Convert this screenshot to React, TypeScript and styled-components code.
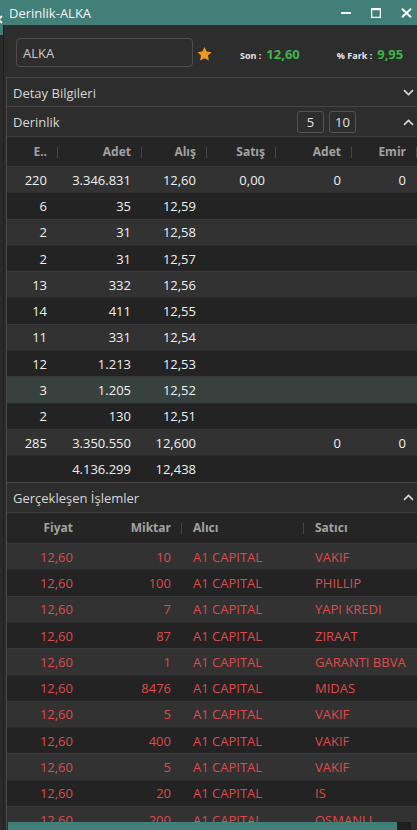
import React from 'react';
import styled, { createGlobalStyle } from 'styled-components';

const TEAL = '#427f79';

const GlobalStyle = createGlobalStyle`
  html, body { margin: 0; padding: 0; background: #2b2b2b; }
  body { font-family: "Open Sans", "Noto Sans", "Liberation Sans", sans-serif; }
  * { box-sizing: border-box; }
`;

const Page = styled.div`
  display: flex;
  width: 417px;
  height: 830px;
  overflow: hidden;
  background: #2d2d2d;
`;

/* sliver of the window lying behind this one */
const Backdrop = styled.div`
  flex: none;
  width: 3px;
  overflow: hidden;
  background: linear-gradient(to bottom, ${TEAL} 0 35px, #2a2a2a 35px);
  svg { display: block; margin: 15px 0 0 -6px; }
`;

const Window = styled.div`
  flex: 1;
  min-width: 0;
  display: flex;
  flex-direction: column;
`;

const TitleBar = styled.div`
  flex: none;
  height: 25px;
  display: flex;
  align-items: center;
  background: ${TEAL};
  padding: 0 5px 0 6px;
`;

const Title = styled.div`
  flex: 1;
  color: #f4f4f4;
  font-size: 13px;
  line-height: 18px;
`;

const Controls = styled.div`
  display: flex;
  align-items: center;
  gap: 20px;
`;

const WindowButton = styled.button`
  padding: 0;
  border: 0;
  background: none;
  display: flex;
  align-items: center;
  justify-content: center;
  height: 25px;
  svg { display: block; }
`;

const Body = styled.div`
  flex: 1;
  min-height: 0;
  display: flex;
  flex-direction: column;
  background: #2d2d2d;
  border-left: 1px solid #1f1f1f;
`;

const QuoteBar = styled.div`
  flex: none;
  height: 52px;
  display: flex;
  align-items: center;
  padding: 3px 0 0 12px;
`;

const SymbolInput = styled.div`
  width: 177px;
  height: 29px;
  border: 1px solid #4c4c4c;
  border-radius: 4px;
  padding-left: 6px;
  display: flex;
  align-items: center;
  color: #cbcbcb;
  font-size: 13px;
`;

const StarWrap = styled.div`
  margin: 2px 0 0 3px;
  display: flex;
  svg { display: block; }
`;

const Stat = styled.div<{ $ml: number }>`
  display: flex;
  align-items: baseline;
  gap: 5px;
  margin-left: ${(p) => p.$ml}px;
  margin-top: 2px;
`;

const StatLabel = styled.span`
  color: #e6e6e6;
  font-size: 9px;
  font-weight: 700;
`;

const StatValue = styled.span`
  color: #3cb64b;
  font-size: 13px;
  font-weight: 700;
`;

const Panels = styled.div`
  flex: 1;
  min-height: 0;
  display: flex;
  flex-direction: column;
  margin-left: 2px;
  border-left: 1px solid #474747;
`;

const SectionHeader = styled.div<{ $h: number }>`
  flex: none;
  height: ${(p) => p.$h}px;
  display: flex;
  align-items: center;
  border-top: 1px solid #454545;
  padding: 1px 3px 0 6px;
  color: #d6d6d6;
  font-size: 13px;
`;

const SectionTitle = styled.div`
  flex: 1;
`;

const DepthButtons = styled.div`
  display: flex;
  gap: 5px;
  margin-right: 47px;
`;

const NumButton = styled.div`
  width: 27px;
  height: 22px;
  border: 1px solid #535353;
  border-radius: 3px;
  display: flex;
  align-items: center;
  justify-content: center;
  color: #e0e0e0;
  font-size: 13px;
`;

const Chevron = styled.svg`
  display: block;
  flex: none;
`;

const HeadRow = styled.div<{ $cols: string; $h: number }>`
  flex: none;
  display: grid;
  grid-template-columns: ${(p) => p.$cols};
  height: ${(p) => p.$h}px;
  align-items: center;
  background: #252525;
  border-top: 1px solid #3a3a3a;
  color: #a2a2a2;
  font-size: 12px;
  font-weight: 700;
`;

const HeadCell = styled.div<{ $align: 'left' | 'right'; $sep?: boolean }>`
  position: relative;
  text-align: ${(p) => p.$align};
  padding: ${(p) => (p.$align === 'right' ? '0 11px 0 0' : '0 0 0 11px')};
  line-height: 28px;
  white-space: nowrap;
  &::after {
    content: '';
    display: ${(p) => (p.$sep ? 'block' : 'none')};
    position: absolute;
    right: 0;
    top: 9px;
    width: 1px;
    height: 11px;
    background: #474747;
  }
`;

type Tone = 'light' | 'dark' | 'hl';
const toneBg: Record<Tone, string> = {
  light: '#323232',
  dark: '#232323',
  hl: '#37423f',
};

const DataRow = styled.div<{ $cols: string; $tone: Tone }>`
  flex: none;
  display: grid;
  grid-template-columns: ${(p) => p.$cols};
  height: 26.3px;
  align-items: center;
  background: ${(p) => toneBg[p.$tone]};
  border-top: 1px solid ${(p) => (p.$tone === 'dark' ? '#2b2b2b' : '#383838')};
  font-size: 13px;
`;

const Cell = styled.div<{ $align: 'left' | 'right'; $color: string }>`
  text-align: ${(p) => p.$align};
  padding: ${(p) => (p.$align === 'right' ? '0 11px 0 0' : '0 0 0 11px')};
  color: ${(p) => p.$color};
  white-space: nowrap;
  overflow: hidden;
`;

const TradesArea = styled.div`
  flex: 1;
  min-height: 0;
  overflow: hidden;
  display: flex;
  flex-direction: column;
`;

const ScrollTrack = styled.div`
  flex: none;
  height: 8px;
  display: flex;
`;

const ScrollThumb = styled.div`
  flex: 1;
  margin-left: 1px;
  background: ${TEAL};
`;

const ScrollCorner = styled.div`
  width: 14px;
  background: #1f1f1f;
`;

const ScrollRest = styled.div`
  width: 6px;
`;

const DEPTH_COLS = '51px 84px 65px 69px 76px 1fr';
const TRADE_COLS = '77px 98px 122px 1fr';

const depthRows: string[][] = [
  ['220', '3.346.831', '12,60', '0,00', '0', '0'],
  ['6', '35', '12,59', '', '', ''],
  ['2', '31', '12,58', '', '', ''],
  ['2', '31', '12,57', '', '', ''],
  ['13', '332', '12,56', '', '', ''],
  ['14', '411', '12,55', '', '', ''],
  ['11', '331', '12,54', '', '', ''],
  ['12', '1.213', '12,53', '', '', ''],
  ['3', '1.205', '12,52', '', '', ''],
  ['2', '130', '12,51', '', '', ''],
  ['285', '3.350.550', '12,600', '', '0', '0'],
  ['', '4.136.299', '12,438', '', '', ''],
];

const trades: [string, string, string, string][] = [
  ['12,60', '10', 'A1 CAPITAL', 'VAKIF'],
  ['12,60', '100', 'A1 CAPITAL', 'PHILLIP'],
  ['12,60', '7', 'A1 CAPITAL', 'YAPI KREDI'],
  ['12,60', '87', 'A1 CAPITAL', 'ZIRAAT'],
  ['12,60', '1', 'A1 CAPITAL', 'GARANTI BBVA'],
  ['12,60', '8476', 'A1 CAPITAL', 'MIDAS'],
  ['12,60', '5', 'A1 CAPITAL', 'VAKIF'],
  ['12,60', '400', 'A1 CAPITAL', 'VAKIF'],
  ['12,60', '5', 'A1 CAPITAL', 'VAKIF'],
  ['12,60', '20', 'A1 CAPITAL', 'IS'],
  ['12,60', '200', 'A1 CAPITAL', 'OSMANLI'],
];

const depthHeads = ['E..', 'Adet', 'Alış', 'Satış', 'Adet', 'Emir'];

const ChevronDown = () => (
  <Chevron width="11" height="7" viewBox="0 0 11 7">
    <path d="M1 1.2 L5.5 5.5 L10 1.2" fill="none" stroke="#d8d8d8" strokeWidth="1.7" />
  </Chevron>
);

const ChevronUp = () => (
  <Chevron width="11" height="7" viewBox="0 0 11 7">
    <path d="M1 5.8 L5.5 1.5 L10 5.8" fill="none" stroke="#d8d8d8" strokeWidth="1.7" />
  </Chevron>
);

export default function App() {
  return (
    <>
      <GlobalStyle />
      <Page>
        <Backdrop>
          <svg width="9" height="9" viewBox="0 0 9 9">
            <path d="M1 1 L8 8 M8 1 L1 8" stroke="#ffffff" strokeWidth="1.8" />
          </svg>
        </Backdrop>
        <Window>
          <TitleBar>
            <Title>Derinlik-ALKA</Title>
            <Controls>
              <WindowButton aria-label="minimize">
                <svg width="10" height="10" viewBox="0 0 10 10">
                  <rect x="0" y="4" width="10" height="2" fill="#ffffff" />
                </svg>
              </WindowButton>
              <WindowButton aria-label="maximize">
                <svg width="10" height="10" viewBox="0 0 10 10">
                  <rect x="0.6" y="0.8" width="8.8" height="8.6" fill="none" stroke="#ffffff" strokeWidth="1.3" />
                  <rect x="0" y="0" width="10" height="2.2" fill="#ffffff" />
                </svg>
              </WindowButton>
              <WindowButton aria-label="close">
                <svg width="11" height="10" viewBox="0 0 11 10">
                  <path d="M1 0.8 L10 9.2 M10 0.8 L1 9.2" stroke="#ffffff" strokeWidth="2" />
                </svg>
              </WindowButton>
            </Controls>
          </TitleBar>
          <Body>
            <QuoteBar>
              <SymbolInput>ALKA</SymbolInput>
              <StarWrap>
                <svg width="17" height="16" viewBox="0 0 24 23">
                  <path
                    d="M12 1.5l3.1 6.5 7.1.9-5.2 4.9 1.3 7.1L12 17.5l-6.3 3.4 1.3-7.1L1.8 8.9l7.1-.9z"
                    fill="#f19a1f"
                  />
                </svg>
              </StarWrap>
              <Stat $ml={27}>
                <StatLabel>Son :</StatLabel>
                <StatValue>12,60</StatValue>
              </Stat>
              <Stat $ml={37}>
                <StatLabel>% Fark :</StatLabel>
                <StatValue>9,95</StatValue>
              </Stat>
            </QuoteBar>
            <Panels>
              <SectionHeader $h={29}>
                <SectionTitle>Detay Bilgileri</SectionTitle>
                <ChevronDown />
              </SectionHeader>
              <SectionHeader $h={30}>
                <SectionTitle>Derinlik</SectionTitle>
                <DepthButtons>
                  <NumButton>5</NumButton>
                  <NumButton>10</NumButton>
                </DepthButtons>
                <ChevronUp />
              </SectionHeader>
              <HeadRow $cols={DEPTH_COLS} $h={30}>
                {depthHeads.map((h, i) => (
                  <HeadCell key={i} $align="right" $sep>
                    {h}
                  </HeadCell>
                ))}
              </HeadRow>
              {depthRows.map((r, i) => (
                <DataRow
                  key={i}
                  $cols={DEPTH_COLS}
                  $tone={i === 8 ? 'hl' : i % 2 === 0 ? 'light' : 'dark'}
                >
                  {r.map((v, j) => (
                    <Cell key={j} $align="right" $color="#f0f0f0">
                      {v}
                    </Cell>
                  ))}
                </DataRow>
              ))}
              <SectionHeader $h={30}>
                <SectionTitle>Gerçekleşen İşlemler</SectionTitle>
                <ChevronUp />
              </SectionHeader>
              <TradesArea>
                <HeadRow $cols={TRADE_COLS} $h={31.5}>
                  <HeadCell $align="right">Fiyat</HeadCell>
                  <HeadCell $align="right" $sep>
                    Miktar
                  </HeadCell>
                  <HeadCell $align="left" $sep>
                    Alıcı
                  </HeadCell>
                  <HeadCell $align="left">Satıcı</HeadCell>
                </HeadRow>
                {trades.map((t, i) => (
                  <DataRow key={i} $cols={TRADE_COLS} $tone={i % 2 === 0 ? 'light' : 'dark'}>
                    <Cell $align="right" $color="#de4a4b">{t[0]}</Cell>
                    <Cell $align="right" $color="#de4a4b">{t[1]}</Cell>
                    <Cell $align="left" $color="#de4a4b">{t[2]}</Cell>
                    <Cell $align="left" $color="#de4a4b">{t[3]}</Cell>
                  </DataRow>
                ))}
              </TradesArea>
              <ScrollTrack>
                <ScrollThumb />
                <ScrollCorner />
                <ScrollRest />
              </ScrollTrack>
            </Panels>
          </Body>
        </Window>
      </Page>
    </>
  );
}
